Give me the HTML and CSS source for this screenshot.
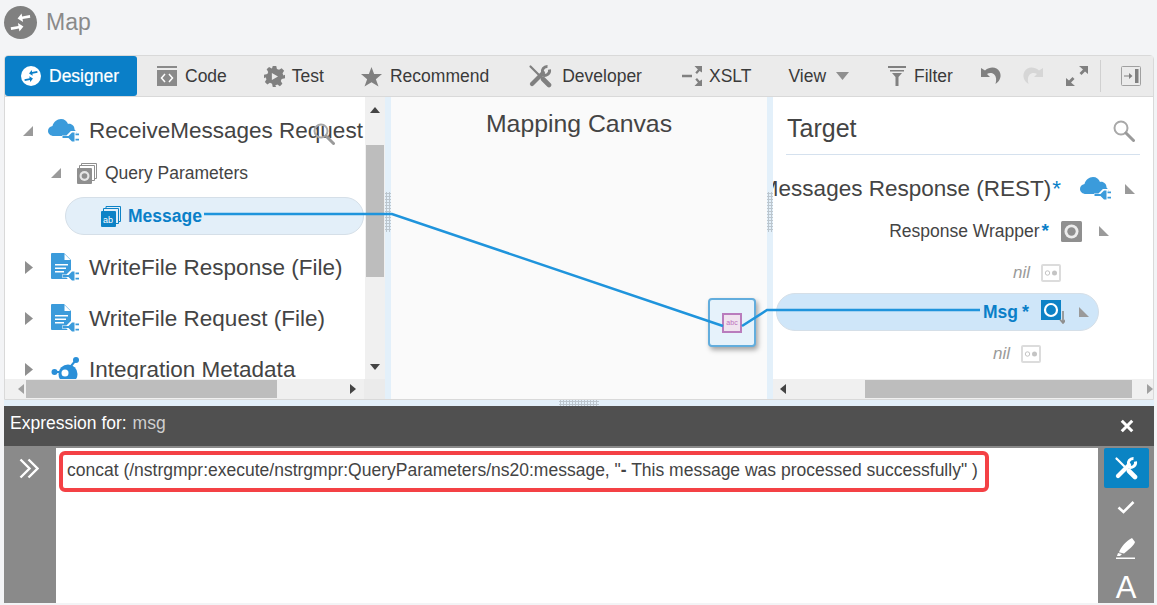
FILE: index.html
```html
<!DOCTYPE html>
<html lang="en">
<head>
<meta charset="utf-8">
<title>Map</title>
<link rel="stylesheet" href="styles.css">
</head>
<body>
<svg class="defs" width="0" height="0" aria-hidden="true">
  <defs>
    <symbol id="plug" viewBox="0 0 17 12">
      <path fill="none" stroke="#fff" stroke-width="3" d="M0 6h5M5 6l5-5h2.500v10H10zM12.500 3.500H17M12.500 8.500H17"/>
      <path fill="#3b9bdb" d="M5 5h1.500L10 1.500h2.500v9H10L6.500 7H5H.5V5zM13.500 2.500H17v1.800h-3.500zM13.500 7.700H17v1.800h-3.500z"/>
    </symbol>
    <symbol id="cloud" viewBox="0 0 31 24">
      <path fill="#3b9bdb" d="M6 17C2.500 17 0 14.800 0 12c0-2.500 1.600-4.500 4.500-5C5.500 3 9 0 13 0c3.500 0 6 2 7 5 1.500-.5 3.500 0 5 1.500 1 1 1.500 2.500 1.500 4 1 .7 1.800 2 1.800 3.500 0 1.300-.6 2.300-1.500 3z"/>
      <use href="#plug" x="14" y="12" width="17" height="12"/>
    </symbol>
    <symbol id="doc" viewBox="0 0 28 29">
      <path fill="#3b9bdb" d="M1 0h12l7 7v19H1a1 1 0 0 1-1-1V1a1 1 0 0 1 1-1z"/>
      <path fill="#fff" d="M13.500 1l6 6h-6zM4 11h13v1.400H4zM4 14.500h11v1.400H4zM4 18h9v1.400H4z"/>
      <use href="#plug" x="11" y="17" width="17" height="12"/>
    </symbol>
    <symbol id="tools" viewBox="0 0 24 24">
      <g fill="none" stroke="currentColor" stroke-linecap="round">
        <path stroke-width="2.200" d="M2.500 2.500l10.500 10.500"/>
        <path stroke-width="4.600" d="M15 15l6 6"/>
        <path stroke-width="4.200" d="M4 20l11-11"/>
        <path stroke-width="3" stroke-linecap="butt" d="M21.500 5.500a5 5 0 0 1-7 5.500M14.500 9a5 5 0 0 1 5-6.500"/>
      </g>
    </symbol>
    <symbol id="collapsed" viewBox="0 0 10 10"><path d="M0 0L10 10H0z" fill="#9a9a9a"/></symbol>
    <symbol id="mapglyph" viewBox="0 0 24 24">
      <g transform="rotate(-10 12 12)" fill="currentColor">
        <path d="M24 5.500H15V2l-5.500 5 5.500 5V8.500h9z"/>
        <path d="M0 18.500h9V22l5.500-5L9 12v3.500H0z"/>
      </g>
    </symbol>
    <symbol id="search" viewBox="0 0 22 22">
      <circle cx="8" cy="8" r="6.500" fill="none" stroke="#a8a8a8" stroke-width="2"/>
      <path d="M13 13l7.500 7.500" stroke="#9a9a9a" stroke-width="3" stroke-linecap="round"/>
    </symbol>
  </defs>
</svg>

<div class="app">
  <header class="page-head">
    <span class="map-badge"><svg class="map-glyph"><use href="#mapglyph"/></svg></span>
    <h1 class="page-title">Map</h1>
  </header>

  <main class="workspace">
    <nav class="toolbar">
      <a class="tab-active"><span class="tab-badge"><svg class="tab-glyph"><use href="#mapglyph"/></svg></span>Designer</a>
      <a class="tool tool-code">
        <svg class="ic20" viewBox="0 0 20 20"><path fill="#8a8a8a" d="M0 0h20v2H0zM0 4h20v16H0z"/><path fill="none" stroke="#fff" stroke-width="1.500" d="M8 8l-3.500 4L8 16M12 8l3.500 4-3.500 4"/></svg>
        Code</a>
      <a class="tool tool-test">
        <svg class="ic21" viewBox="0 0 24 24"><path fill="#808080" fill-rule="evenodd" d="M10 0h4l.8 3.400 2.400 1 3-1.800 2.800 2.800-1.800 3 1 2.400L24 10v4l-3.800.8-1 2.400 1.800 3-2.800 2.800-3-1.800-2.400 1L14 24h-4l-.8-3.800-2.400-1-3 1.800L1 18.200l1.800-3-1-2.400L0 14v-4l3.800-.8 1-2.400-1.800-3L5.800 1l3 1.800 .4-.2zM9 8v8l7-4z"/></svg>
        Test</a>
      <a class="tool tool-rec">
        <svg class="ic21" viewBox="0 0 24 24"><path fill="#808080" d="M12 1l3 8h9l-7 6 3 8.500-8-5-8 5L7 15 0 9h9z"/></svg>
        Recommend</a>
      <a class="tool tool-dev">
        <svg class="ic24 tools-grey"><use href="#tools"/></svg>
        Developer</a>
      <a class="tool tool-xslt">
        <svg class="ic20" viewBox="0 0 20 20"><path fill="#808080" d="M0 8.800h10v2.400H0zM12.500 0H20v6.500l-2.400-1.600-2.600 3-1.700-1.500 2.600-3zM12.500 20H20v-6.500l-2.400 1.600-2.600-3-1.700 1.500 2.600 3z"/></svg>
        XSLT</a>
      <a class="tool tool-view">View<svg class="caret" viewBox="0 0 13 8"><path d="M0 0h13L6.500 8z" fill="#8f8f8f"/></svg></a>
      <a class="tool tool-filter">
        <svg class="ic18" viewBox="0 0 18 20"><path fill="#808080" d="M0 0h18v2H0zM2 4h14v1.600H2zM4 7h10L10.500 11v9h-3V11z"/></svg>
        Filter</a>
      <svg class="ic22 t-undo" viewBox="0 0 22 20"><path fill="#808080" d="M0 2v9h9L6 8c2-1.500 5-1.500 7 .3 2.300 2 2.700 5.500 1.500 9.700 4.500-3 6.500-8 4-12.500C15.800 1 9.500 0 4 4.500z"/></svg>
      <svg class="ic22 t-redo" viewBox="0 0 22 20"><path fill="#d6d6d6" d="M22 2v9h-9l3-3c-2-1.500-5-1.500-7 .3-2.300 2-2.700 5.500-1.500 9.700-4.500-3-6.500-8-4-12.500C6.200 1 12.500 0 18 4.500z"/></svg>
      <svg class="ic22 t-exp" viewBox="0 0 22 20"><path fill="#808080" d="M13 0h9v8l-3-2.500-3.500 3.500-2-2L17 3.500zM9 20H0v-8l3 2.500 3.500-3.500 2 2L5 16.500z"/></svg>
      <span class="t-sep"></span>
      <svg class="ic20 t-panel" viewBox="0 0 20 20"><rect x=".5" y=".5" width="19" height="19" rx="1" fill="none" stroke="#a0a0a0"/><path fill="#808080" d="M14 3h3.500v14H14zM3 9.500h5V7l3.500 3L8 13v-2.500H3z"/></svg>
    </nav>

    <div class="mapper">
      <section class="pane pane-source">
        <div class="pane-body">
          <div class="tree">
            <div class="row row-root">
              <svg class="tw tw-open"><use href="#collapsed"/></svg>
              <svg class="cloud-ic"><use href="#cloud"/></svg>
              <span class="label-lg">ReceiveMessages Request</span>
            </div>
            <div class="row row-child">
              <svg class="tw tw-open"><use href="#collapsed"/></svg>
              <svg class="stack-ic" viewBox="0 0 20 21"><path fill="none" stroke="#8f8f8f" d="M4.500 3V.5h15v15H17M2.500 5V2.500h15v15H15"/><rect y="5" width="15" height="16" rx="1" fill="#8f8f8f"/><circle cx="7.500" cy="13" r="5" fill="#e6e6e6"/><circle cx="7.500" cy="13" r="2.800" fill="#8f8f8f"/></svg>
              <span class="label-md">Query Parameters</span>
            </div>
            <div class="pill pill-source">
              <svg class="stack-ab" viewBox="0 0 20 21"><path fill="none" stroke="#0d82c6" d="M5 3V.5h14.500v15H17M2.500 5V2.500h15v15H15"/><rect y="5" width="15" height="16" rx="1" fill="#0d82c6"/><text x="2" y="17" class="ab-text">ab</text></svg>
              <strong class="label-bold">Message</strong>
            </div>
            <div class="row row-top">
              <svg class="tw-right" viewBox="0 0 8 13"><path d="M0 0l8 6.500L0 13z" fill="#8f8f8f"/></svg>
              <svg class="doc-ic"><use href="#doc"/></svg>
              <span class="label-lg">WriteFile Response (File)</span>
            </div>
            <div class="row row-top">
              <svg class="tw-right" viewBox="0 0 8 13"><path d="M0 0l8 6.500L0 13z" fill="#8f8f8f"/></svg>
              <svg class="doc-ic"><use href="#doc"/></svg>
              <span class="label-lg">WriteFile Request (File)</span>
            </div>
            <div class="row row-top">
              <svg class="tw-right" viewBox="0 0 8 13"><path d="M0 0l8 6.500L0 13z" fill="#8f8f8f"/></svg>
              <svg class="meta-ic" viewBox="0 0 28 28"><circle cx="25" cy="4" r="3" fill="#2a8fd8"/><circle cx="3.500" cy="16" r="3" fill="#2a8fd8"/><path stroke="#2a8fd8" stroke-width="2" d="M3.500 16H12M25 4l-5 6"/><circle cx="17" cy="18" r="9.500" fill="#2a8fd8"/><circle cx="14" cy="17" r="3.500" fill="#fff"/></svg>
              <span class="label-lg">Integration Metadata</span>
            </div>
            <svg class="pane-search"><use href="#search"/></svg>
          </div>
          <div class="vbar">
            <svg class="arr" viewBox="0 0 10 6"><path d="M5 0l5 6H0z" fill="#444"/></svg>
            <span class="vthumb"></span>
            <svg class="arr arr-end" viewBox="0 0 10 6"><path d="M5 6l5-6H0z" fill="#444"/></svg>
          </div>
        </div>
        <div class="hbar hbar-source">
          <svg class="arr-h" viewBox="0 0 6 10"><path d="M0 5l6-5v10z" fill="#a0a0a0"/></svg>
          <span class="hthumb-source"></span>
          <svg class="arr-h" viewBox="0 0 6 10"><path d="M6 5L0 0v10z" fill="#444"/></svg>
          <span class="hbar-corner"></span>
        </div>
      </section>

      <div class="splitter"><span class="grip"></span></div>

      <section class="canvas">
        <h2 class="canvas-title">Mapping Canvas</h2>
        <div class="fn-node"><span class="fn-inner">abc</span></div>
      </section>

      <div class="splitter"><span class="grip"></span></div>

      <section class="pane pane-target">
        <div class="target-head">
          <h2 class="target-title">Target</h2>
          <svg class="target-search"><use href="#search"/></svg>
        </div>
        <div class="target-rows">
          <div class="trow trow-root">
            <span class="label-lg nowrap">ReceiveMessages Response (REST)<b class="star">*</b></span>
            <svg class="cloud-ic"><use href="#cloud"/></svg>
            <svg class="tw tw-t"><use href="#collapsed"/></svg>
          </div>
          <div class="trow trow-wrap">
            <span class="label-md">Response Wrapper<b class="star">*</b></span>
            <svg class="box-ic" viewBox="0 0 21 21"><rect width="21" height="21" rx="1.500" fill="#8f8f8f"/><circle cx="10.500" cy="10.500" r="7" fill="#ececec"/><circle cx="10.500" cy="10.500" r="4.200" fill="#8f8f8f"/></svg>
            <svg class="tw tw-t"><use href="#collapsed"/></svg>
          </div>
          <div class="trow trow-nil1">
            <i class="nil">nil</i>
            <svg class="nil-ic" viewBox="0 0 20 18"><rect x="1" y="1" width="18" height="16" rx="1" fill="#fff" stroke="#dcdcdc" stroke-width="2"/><circle cx="6.500" cy="9" r="2.200" fill="#fff" stroke="#c4c4c4"/><circle cx="13.500" cy="9" r="2.500" fill="#c4c4c4"/></svg>
          </div>
          <div class="pill pill-target">
            <strong class="label-bold">Msg</strong><b class="star star-bold">*</b>
            <svg class="msg-ic" viewBox="0 0 24 24"><rect width="20" height="20" fill="#0d82c6"/><circle cx="10" cy="10" r="6" fill="none" stroke="#fff" stroke-width="2.200"/><path d="M22 11v12M19 19.500l3 3.500 3-3.500" stroke="#8f8f8f" stroke-width="1.700" fill="none"/></svg>
            <svg class="tw tw-t"><use href="#collapsed"/></svg>
          </div>
          <div class="trow trow-nil2">
            <i class="nil">nil</i>
            <svg class="nil-ic" viewBox="0 0 20 18"><rect x="1" y="1" width="18" height="16" rx="1" fill="#fff" stroke="#dcdcdc" stroke-width="2"/><circle cx="6.500" cy="9" r="2.200" fill="#fff" stroke="#c4c4c4"/><circle cx="13.500" cy="9" r="2.500" fill="#c4c4c4"/></svg>
          </div>
        </div>
        <div class="hbar hbar-target">
          <svg class="arr-h" viewBox="0 0 6 10"><path d="M0 5l6-5v10z" fill="#444"/></svg>
          <span class="hthumb-target"></span>
          <svg class="arr-h" viewBox="0 0 6 10"><path d="M6 5L0 0v10z" fill="#a0a0a0"/></svg>
        </div>
      </section>
    </div>
  </main>

  <div class="h-splitter"><span class="h-grip"></span></div>

  <section class="expr">
    <div class="expr-head">
      <span class="expr-title">Expression for: <span class="expr-name">msg</span></span>
      <svg class="expr-close" viewBox="0 0 12 12"><path d="M1.500 1.500l9 9M10.500 1.500l-9 9" stroke="#fff" stroke-width="2.600"/></svg>
    </div>
    <div class="expr-body">
      <div class="gutter-left">
        <svg class="chev" viewBox="0 0 20 21"><path d="M1.500 1.500l9 9-9 9M9.500 1.500l9 9-9 9" fill="none" stroke="#fff" stroke-width="2.400"/></svg>
      </div>
      <div class="editor">
        <div class="highlight">concat (/nstrgmpr:execute/nstrgmpr:QueryParameters/ns20:message, "<b class="dash">-</b> This message was processed successfully" )</div>
      </div>
      <div class="gutter-right">
        <button class="g-btn"><svg class="ic24 tools-white"><use href="#tools"/></svg></button>
        <svg class="g-check" viewBox="0 0 18 14"><path d="M1.500 7.500L6.500 12 16.500 2" fill="none" stroke="#fff" stroke-width="2.600"/></svg>
        <svg class="g-pen" viewBox="0 0 20 21"><path fill="#fff" d="M16 0l3 4c-.5 2-3 5-8 9l-3 2.500-5-1.200C5 9 10 3 16 0zM2 15l4 1-2 2H1zM0 19.500h19V21H0z"/></svg>
        <span class="g-a">A</span>
      </div>
    </div>
  </section>

  <svg class="wires" viewBox="0 0 1157 605" aria-hidden="true">
    <polyline points="204,214 392,214 723,326" fill="none" stroke="#1f94dc" stroke-width="2.500"/>
    <polyline points="742,326 767,310 980,310" fill="none" stroke="#1f94dc" stroke-width="2.500"/>
  </svg>
</div>
</body>
</html>
```
FILE: styles.css
```css
* { box-sizing: border-box; }
html, body { margin: 0; padding: 0; }
body { background: #f3f4f6; font-family: "Liberation Sans", Arial, sans-serif; color: #3f3f3f; overflow: hidden; }
.defs { position: absolute; }
.app { position: relative; width: 1157px; height: 605px; overflow: hidden; }

.page-head { height: 55px; display: flex; align-items: center; padding: 0 0 10px 4px; }
.map-badge { width: 33px; height: 33px; border-radius: 50%; background: #808080; display: flex; align-items: center; justify-content: center; }
.map-glyph { width: 21px; height: 21px; color: #fff; }
.page-title { margin: 0 0 0 9px; font-weight: 400; font-size: 23px; color: #8a8a8a; }

.workspace { margin: 0 3px 0 4px; height: 345px; border: 1px solid #d9d9d9; border-radius: 4px 4px 0 0; background: #fff; display: flex; flex-direction: column; }
.toolbar { height: 41px; flex: none; background: #ebebeb; border-bottom: 1px solid #d9d9d9; display: flex; align-items: center; font-size: 17.500px; color: #3a3a3a; }
.tab-active { width: 132px; height: 40px; background: #0a7fc8; color: #fff; border-radius: 3px; display: flex; align-items: center; padding-left: 16px; gap: 8px; font-size: 17.500px; -webkit-text-stroke: .2px #fff; }
.tab-badge { width: 20px; height: 20px; border-radius: 50%; background: #fff; display: flex; align-items: center; justify-content: center; }
.tab-glyph { width: 14px; height: 14px; color: #0a7fc8; }
.tool { display: flex; align-items: center; gap: 8px; }
.tool-code { margin-left: 20px; }
.tool-test { margin-left: 37px; gap: 7px; }
.tool-rec { margin-left: 37px; }
.tool-dev { margin-left: 39px; gap: 10px; }
.tool-xslt { margin-left: 40px; gap: 7px; }
.tool-view { margin-left: 37px; gap: 10px; }
.tool-filter { margin-left: 39px; gap: 8px; }
.caret { width: 13px; height: 8px; }
.ic18 { width: 18px; height: 20px; flex: none; }
.ic20 { width: 20px; height: 20px; flex: none; }
.ic21 { width: 21px; height: 21px; flex: none; }
.ic22 { width: 22px; height: 20px; flex: none; }
.ic24 { width: 24px; height: 24px; flex: none; }
.tools-grey { color: #808080; }
.tools-white { color: #fff; }
.t-undo { margin-left: 28px; }
.t-redo { margin-left: 18px; }
.t-exp { margin-left: 23px; }
.t-sep { width: 1px; height: 32px; background: #d0d0d0; margin-left: 12px; }
.t-panel { margin-left: 20px; }

.mapper { flex: 1; min-height: 0; display: flex; background: #e3f0fa; }
.pane { display: flex; flex-direction: column; width: 380px; flex: none; background: #fff; min-width: 0; }
.pane-body { flex: 1; min-height: 0; display: flex; }
.tree { position: relative; flex: 1; min-width: 0; overflow: hidden; padding-top: 13px; }
.row { display: flex; align-items: center; white-space: nowrap; }
.row-root { height: 42px; }
.row-child { height: 42px; }
.row-top { height: 51px; }
.tw { width: 10px; height: 10px; flex: none; }
.tw-open { transform: scaleX(-1); }
.row-root .tw { margin-left: 18px; }
.cloud-ic { width: 31px; height: 24px; flex: none; }
.row-root .cloud-ic { margin-left: 15px; }
.row-root .label-lg { margin-left: 10px; }
.row-child .tw { margin-left: 46px; }
.stack-ic { width: 20px; height: 21px; margin-left: 16px; flex: none; }
.row-child .label-md { margin-left: 8px; }
.tw-right { width: 8px; height: 13px; margin-left: 20px; flex: none; }
.doc-ic { width: 28px; height: 29px; margin-left: 18px; flex: none; }
.meta-ic { width: 28px; height: 28px; margin-left: 18px; flex: none; }
.row-top .label-lg { margin-left: 10px; }
.label-lg { font-size: 22.500px; color: #444; }
.label-md { font-size: 17.500px; color: #444; }
.label-bold { font-size: 17.500px; color: #0a7fc8; font-weight: 700; }
.nowrap { white-space: nowrap; }
.pill { border: 1px solid #d5dfe8; border-radius: 19px; display: flex; align-items: center; }
.pill-source { margin: 3px 0 7px 60px; width: 299px; height: 38px; background: #e3eff9; padding-left: 35px; }
.stack-ab { width: 20px; height: 21px; margin-right: 7px; flex: none; }
.ab-text { font: 9px "Liberation Sans", sans-serif; fill: #fff; }
.pane-search { position: absolute; left: 308px; top: 26px; width: 22px; height: 22px; }
.vbar { width: 20px; flex: none; background: #f0f0f0; display: flex; flex-direction: column; align-items: center; padding: 10px 0 9px; }
.arr { width: 10px; height: 6px; flex: none; }
.arr-end { margin-top: auto; }
.vthumb { width: 18px; height: 132px; background: #bdbdbd; margin-top: 32px; }
.hbar { height: 20px; flex: none; background: #f0f0f0; display: flex; align-items: center; }
.arr-h { width: 6px; height: 10px; flex: none; }
.hbar-source { padding-left: 13px; }
.hthumb-source { width: 252px; height: 18px; background: #bdbdbd; margin: 0 73px 0 2px; }
.hbar-corner { margin-left: 8px; width: 21px; height: 20px; background: #ebebeb; }

.splitter { width: 6px; flex: none; display: flex; align-items: center; padding-bottom: 72px; }
.grip { width: 6px; height: 40px; background-image: radial-gradient(#bcc6ce 1px, transparent 1.300px); background-size: 3px 3px; }
.canvas { position: relative; width: 376px; flex: none; background: #fafafa; }
.canvas-title { margin: 13px 0 0; text-align: center; font-weight: 400; font-size: 24.800px; color: #444; }
.fn-node { position: absolute; left: 317px; top: 201px; width: 48px; height: 49px; background: #e6f2fb; border: 2px solid #62addd; border-radius: 4px; box-shadow: 2px 3px 5px rgba(0,0,0,.35); display: flex; align-items: center; justify-content: center; padding-top: 1px; }
.fn-inner { width: 20px; height: 20px; background: #f0e3ef; border: 2px solid #b97cbd; font-size: 7px; line-height: 16px; text-align: center; color: #bd6fbd; overflow: hidden; }

.pane-target { overflow: hidden; }
.target-head { margin: 0 13px; height: 58px; flex: none; border-bottom: 1px solid #d5e1ee; display: flex; align-items: center; justify-content: space-between; padding: 6px 0 0 1px; }
.target-title { margin: 0; font-weight: 400; font-size: 25px; color: #444; }
.target-search { width: 22px; height: 22px; margin-right: 5px; margin-top: 4px; }
.target-rows { flex: 1; min-height: 0; overflow: hidden; padding-top: 12px; }
.trow { display: flex; align-items: center; justify-content: flex-end; white-space: nowrap; }
.trow-root { height: 43px; padding-right: 18px; }
.trow-root .tw-t { margin-left: 14px; }
.trow-root .cloud-ic { margin-left: 19px; }
.trow-wrap { height: 42px; padding-right: 44px; }
.trow-wrap .star { font-weight: 700; font-size: 19px; margin-left: 2px; }
.trow-wrap .box-ic { margin-left: 12px; }
.trow-wrap .tw-t { margin-left: 17px; }
.trow-nil1 { height: 42px; padding-right: 92px; }
.trow-nil2 { height: 40px; padding-right: 112px; }
.star { color: #0a7fc8; font-weight: 400; margin-left: 1px; }
.box-ic { width: 21px; height: 21px; flex: none; }
.nil { font-size: 17px; color: #9a9a9a; }
.nil-ic { width: 20px; height: 18px; margin-left: 11px; flex: none; }
.pill-target { margin: -1px 54px 3px 3px; height: 38px; background: #cfe6f9; justify-content: flex-end; padding-right: 9px; }
.star-bold { font-size: 18px; margin-left: 4px; font-weight: 700; margin-right: 12px; }
.msg-ic { width: 24px; height: 24px; flex: none; }
.pill-target .tw-t { margin-left: 14px; }
.hbar-target { padding-left: 7px; }
.hthumb-target { width: 267px; height: 18px; background: #bdbdbd; margin: 0 15px 0 79px; }

.h-splitter { height: 6px; margin: 0 3px 0 4px; background: #e3f0fa; display: flex; justify-content: center; }
.h-grip { width: 40px; height: 6px; background-image: radial-gradient(#bcc6ce 1px, transparent 1.300px); background-size: 3px 3px; }

.expr { margin: 0 3px 0 4px; }
.expr-head { height: 40px; background: #505050; display: flex; align-items: center; justify-content: space-between; padding: 0 20px 6px 6px; font-size: 17.500px; color: #fff; }
.expr-name { color: #cfcfcf; margin-left: 1px; }
.expr-close { width: 14px; height: 14px; margin-top: 6px; }
.expr-body { height: 157px; background: #8a8a8a; display: flex; }
.gutter-left { width: 52px; flex: none; padding: 12px 0 0 15px; }
.chev { width: 20px; height: 21px; display: block; }
.editor { flex: 1; min-width: 0; background: #fff; margin-top: 2px; padding: 3px 0 0 3px; font-size: 17.500px; color: #444; }
.highlight { width: 930px; height: 41px; border: 4px solid #f44145; border-radius: 6px; padding: 0 0 0 4px; line-height: 31px; white-space: nowrap; }
.dash { font-weight: 700; }
.gutter-right { width: 56px; flex: none; display: flex; flex-direction: column; align-items: center; padding-top: 2px; }
.g-btn { width: 45px; height: 40px; border: 0; padding: 0; background: #0a84c4; border-radius: 2px; display: flex; align-items: center; justify-content: center; flex: none; }
.g-check { width: 18px; height: 14px; margin-top: 12px; flex: none; }
.g-pen { width: 20px; height: 21px; margin-top: 24px; flex: none; }
.g-a { font-size: 31px; color: #fff; line-height: 32px; margin-top: 13px; flex: none; }

.wires { position: absolute; left: 0; top: 0; width: 1157px; height: 605px; pointer-events: none; }
```
